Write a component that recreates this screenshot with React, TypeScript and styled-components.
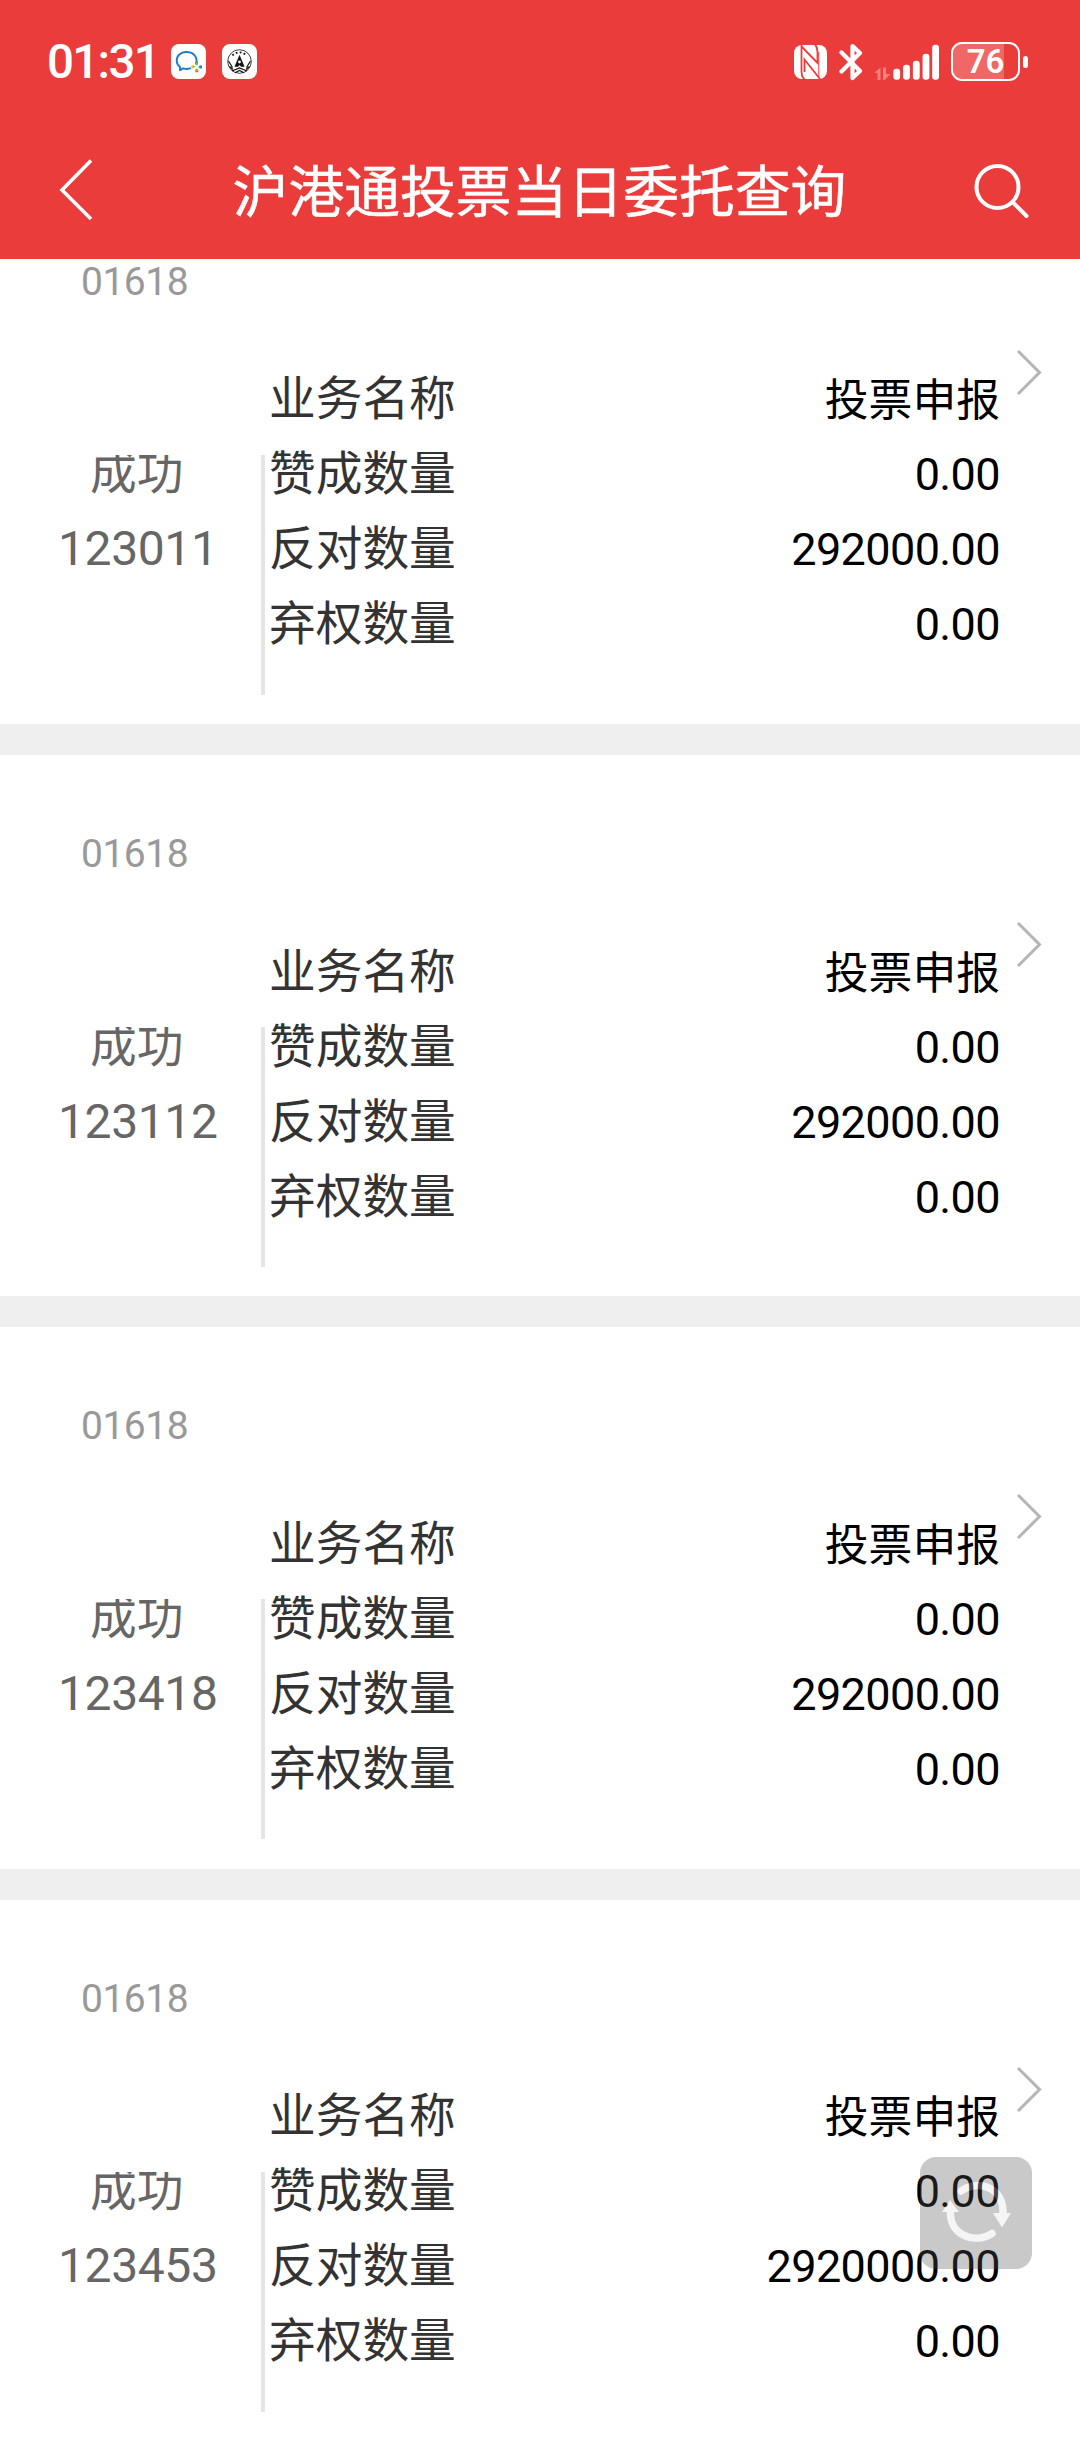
import React from "react";
import styled, { createGlobalStyle } from "styled-components";

const Global = createGlobalStyle`
  * { box-sizing: border-box; }
  body { margin: 0; background: #fff; font-family: Roboto, "Noto Sans CJK SC", sans-serif; }
`;

const Screen = styled.div`
  position: relative;
  width: 1080px;
  height: 2440px;
  overflow: hidden;
  background: #fff;
  display: flex;
  flex-direction: column;
`;

const Header = styled.header`
  flex: none;
  height: 259px;
  background: #ea3c3b;
  color: #fff;
`;

const StatusBar = styled.div`
  height: 123px;
  padding: 0 52px 0 47px;
  display: flex;
  justify-content: space-between;
  align-items: center;
`;

const Group = styled.div<{ $gap: number }>`
  display: flex;
  align-items: center;
  gap: ${(p) => p.$gap}px;
`;

const Clock = styled.span`
  width: 108px;
  font-size: 47.5px;
  font-weight: 500;
  line-height: 60px;
  letter-spacing: -1.7px;
  white-space: nowrap;
`;

const AppBadge = styled.span`
  display: flex;
  width: 35px;
  height: 35px;
  border-radius: 8px;
  background: #fff;
`;

const NavBar = styled.div`
  height: 136px;
  padding: 0 50px 0 58px;
  display: flex;
  align-items: center;
  justify-content: space-between;
`;

const Title = styled.h1`
  margin: 3px 0 0 11px;
  font-size: 55.8px;
  font-weight: 400;
  line-height: 80px;
  -webkit-text-stroke: 0.5px #fff;
`;

const List = styled.main`
  flex: 1;
  min-height: 0;
  overflow: hidden;
  display: flex;
  flex-direction: column;
`;

const Card = styled.article<{ $scrolled?: boolean }>`
  flex: none;
  height: 572.4px;
  margin-top: ${(p) => (p.$scrolled ? -76.4 : 0)}px;
  border-bottom: 31px solid #efefef;
  display: grid;
  grid-template: 130px 411px / 270px 1fr 80px;
`;

const Code = styled.div`
  grid-column: 1 / -1;
  padding: 72px 0 0 81px;
  font-size: 39px;
  line-height: 54px;
  letter-spacing: -0.5px;
  color: #999;
`;

const Side = styled.div`
  height: 240px;
  margin: 142px 5px 0 0;
  border-right: 4px solid #e5e5e5;
  overflow: hidden;
  color: #666;
  font-size: 48px;
  line-height: 75px;
  letter-spacing: -0.4px;
`;

const Status = styled.div`
  margin-top: -18.5px;
  padding-left: 90px;
  font-size: 46.7px;
  letter-spacing: 0;
`;

const Time = styled.div`
  padding-left: 58px;
`;

const Fields = styled.dl`
  margin: 0 0 0 -1px;
  padding-top: 49.5px;
`;

const Field = styled.div`
  height: 75px;
  display: flex;
  justify-content: space-between;
  line-height: 75px;
`;

const Label = styled.dt`
  font-size: 46.7px;
  color: #333;
`;

const Value = styled.dd<{ $text?: boolean }>`
  margin: 0;
  padding-top: ${(p) => (p.$text ? 2 : 0)}px;
  font-size: ${(p) => (p.$text ? 43.8 : 45)}px;
  letter-spacing: ${(p) => (p.$text ? 0 : -0.6)}px;
  color: #000;
`;

const Arrow = styled.svg`
  margin: 35px 0 0 16px;
`;

const Refresh = styled.button`
  position: absolute;
  left: 920px;
  top: 2157px;
  width: 112px;
  height: 112px;
  padding: 0;
  border: 0;
  border-radius: 16px;
  background: #545454;
  opacity: 0.31;
`;

const WeComIcon = () => (
  <svg width="35" height="35" viewBox="0 0 35 35" fill="none">
    <path d="M25 20.5c2-6-1-12-9-12.500C9.500 7.500 5.500 12 5.700 17c.1 2.700 1.500 4.600 3.300 6v3.200l3.300-1.800c2.700.8 5.300.7 7.700-.2" stroke="#1c7ccb" strokeWidth="1.900" strokeLinejoin="round" />
    <circle cx="25.500" cy="19" r="1.700" fill="#4fb13c" />
    <circle cx="29.500" cy="23" r="1.700" fill="#1c7ccb" />
    <circle cx="25.800" cy="26.800" r="1.700" fill="#ee6a35" />
    <circle cx="21.800" cy="22.800" r="1.700" fill="#f5c52c" />
    <path d="M25.500 19l1 2.500M29.500 23l-2.500.5M25.800 26.800l-.5-2.500M21.800 22.800l2.500-.5" stroke="#8fbf4a" strokeWidth="1.200" />
  </svg>
);

const EmblemIcon = () => (
  <svg width="35" height="35" viewBox="0 0 35 35" fill="none" stroke="#111">
    <circle cx="17.500" cy="17.500" r="11.800" strokeWidth=".8" />
    <path d="M10.500 11.500a9.500 9.500 0 0 1 14 0" strokeWidth="1.800" strokeDasharray="1.800 2.200" />
    <path d="M17.500 11.500l4.600 11h-3l-1.600-1.800-1.600 1.800h-3z" fill="#111" strokeWidth=".6" />
    <circle cx="17.500" cy="18" r="1.400" fill="#fff" stroke="none" />
    <path d="M6.500 17l4 6.500M28.500 17l-4 6.500M7.500 22.500l3.500 3M27.500 22.500l-3.500 3M10 27l7.500-3 7.500 3M13 28.800l4.500-2.300 4.500 2.300" strokeWidth="1.200" />
  </svg>
);

const NfcIcon = () => (
  <svg width="33" height="34" viewBox="0 0 33 34">
    <rect width="33" height="34" rx="8" fill="#fff" />
    <g fill="none" stroke="#ea3c3b" strokeWidth="1.800">
      <path d="M7.500 0v27c0 3.500.8 5.500 3 7.500" />
      <path d="M7.500 1.500L23.500 18V7c0-3.500-.5-5.500-2.500-7.500" />
      <path d="M26 34L10.500 14.500V27" />
      <path d="M24.800 7v26" strokeWidth="1" />
    </g>
  </svg>
);

const BluetoothIcon = () => (
  <svg width="24" height="38" viewBox="0 0 24 38" fill="none" stroke="#fff" strokeWidth="4.200" strokeLinejoin="round" strokeLinecap="round">
    <path d="M2.500 9.500L21 28l-7.500 7V3L21 10 2.500 28.500" />
  </svg>
);

const Signal = styled.svg`
  margin-right: -2px;
`;

const SignalIcon = () => (
  <Signal width="66" height="36" viewBox="0 0 66 36">
    <path d="M-1 29l6.500-5.500V36H2.500v-7zM8 23.500h3V30h4.500L9.500 36H8z" fill="#f77f7c" />
    <g fill="#fff">
      <rect x="18.300" y="24.800" width="6.800" height="11" rx="3" />
      <rect x="28.100" y="20.800" width="6.800" height="15" rx="3" />
      <rect x="37.900" y="16.800" width="6.800" height="19" rx="3" />
      <rect x="47.600" y="9.800" width="6.800" height="26" rx="3" />
      <rect x="57.200" y="0.800" width="6.800" height="35" rx="3" />
    </g>
  </Signal>
);

const Battery = styled.div`
  width: 69px;
  height: 39px;
  border: 2.5px solid #fff;
  border-radius: 11px;
  background: linear-gradient(90deg, #f06766 0 51px, transparent 51px);
  background-clip: padding-box;
  display: flex;
  align-items: center;
  justify-content: center;
  font-size: 33px;
  font-weight: 600;
  line-height: 33px;
`;

const BatteryTip = styled.span`
  width: 5px;
  height: 12px;
  border-radius: 2.5px;
  background: #fff;
`;

type Order = { time: string; against: string };

const orders: Order[] = [
  { time: "123011", against: "292000.00" },
  { time: "123112", against: "292000.00" },
  { time: "123418", against: "292000.00" },
  { time: "123453", against: "2920000.00" },
];

const OrderCard = ({ order, scrolled }: { order: Order; scrolled: boolean }) => (
  <Card $scrolled={scrolled}>
    <Code>01618</Code>
    <Side>
      <Status>成功</Status>
      <Time>{order.time}</Time>
    </Side>
    <Fields>
      <Field><Label>业务名称</Label><Value $text>投票申报</Value></Field>
      <Field><Label>赞成数量</Label><Value>0.00</Value></Field>
      <Field><Label>反对数量</Label><Value>{order.against}</Value></Field>
      <Field><Label>弃权数量</Label><Value>0.00</Value></Field>
    </Fields>
    <Arrow width="28" height="48" viewBox="0 0 28 48" fill="none" stroke="#b5b5b5" strokeWidth="3">
      <path d="M2 3l21.500 21.500L2 46" />
    </Arrow>
  </Card>
);

export default function App() {
  return (
    <Screen>
      <Global />
      <Header>
        <StatusBar>
          <Group $gap={16}>
            <Clock>01:31</Clock>
            <AppBadge><WeComIcon /></AppBadge>
            <AppBadge><EmblemIcon /></AppBadge>
          </Group>
          <Group $gap={12}>
            <NfcIcon />
            <BluetoothIcon />
            <SignalIcon />
            <Group $gap={3}>
              <Battery>76</Battery>
              <BatteryTip />
            </Group>
          </Group>
        </StatusBar>
        <NavBar>
          <svg width="36" height="64" viewBox="0 0 36 64" fill="none" stroke="#fff" strokeWidth="3.600">
            <path d="M33 1.500L4 31l29 29" />
          </svg>
          <Title>沪港通投票当日委托查询</Title>
          <svg width="56" height="56" viewBox="0 0 56 56" fill="none" stroke="#fff" strokeWidth="4" strokeLinecap="round">
            <circle cx="23.500" cy="24" r="21" />
            <path d="M39 39.500l13.500 13.500" />
          </svg>
        </NavBar>
      </Header>
      <List>
        {orders.map((o, i) => (
          <OrderCard key={o.time} order={o} scrolled={i === 0} />
        ))}
      </List>
      <Refresh aria-label="刷新">
        <svg width="112" height="112" viewBox="0 0 112 112" fill="none" stroke="#dfdfdf" strokeWidth="7.500" strokeLinecap="round">
          <path d="M41 34C56 23 84 28 83 57" />
          <path d="M30.500 54C29 77 53 88 72 76.500" />
          <path d="M73 56h18l-9 14.500zM22 55l8-12 9 12z" fill="#dfdfdf" stroke="none" />
        </svg>
      </Refresh>
    </Screen>
  );
}
